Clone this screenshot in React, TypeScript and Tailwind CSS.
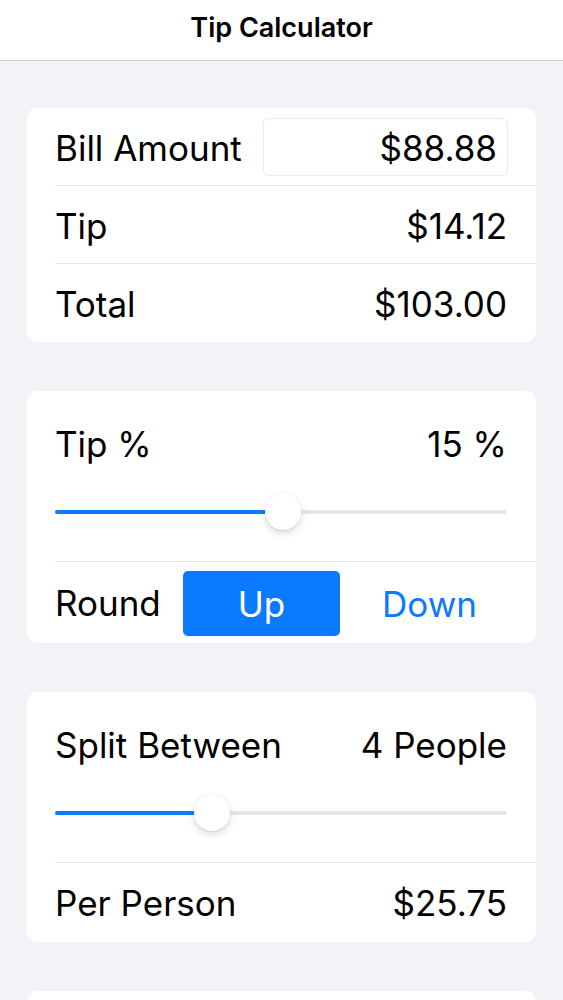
import { useState } from "react";

type RowProps = {
  label: string;
  value: string;
  divider?: boolean;
};

const Row = ({ label, value, divider }: RowProps) => (
  <div className="pl-7">
    <div
      className={
        "h-[78px] pt-[2px] pr-[29px] flex items-center justify-between " +
        (divider ? "border-b border-[#e4e4e8]" : "")
      }
    >
      <span>{label}</span>
      <span>{value}</span>
    </div>
  </div>
);

type SliderProps = {
  percent: number;
};

const Slider = ({ percent }: SliderProps) => (
  <div className="relative h-9 flex items-center">
    <div className="w-full h-1 rounded-full bg-[#e5e5ea] overflow-hidden flex">
      <div className="h-full bg-[#0a7aff]" style={{ width: `${percent}%` }} />
    </div>
    <div
      className="absolute top-0 w-9 h-9 -ml-[18px] rounded-full bg-white shadow-[0_3px_8px_rgba(0,0,0,0.15),0_1px_1px_rgba(0,0,0,0.08)]"
      style={{ left: `${percent}%` }}
    />
  </div>
);

export default function App() {
  const [round, setRound] = useState<"up" | "down">("up");

  return (
    <div className="min-h-screen bg-[#f2f2f7] font-['Inter',sans-serif] text-[35px] leading-[42px] text-black">
      <header className="h-[61px] bg-white border-b border-[#d1d1d6] flex items-center justify-center">
        <h1 className="text-[27px] leading-[34px] font-semibold -mt-1">
          Tip Calculator
        </h1>
      </header>

      <main className="px-[27px] pt-[47px] flex flex-col gap-[49px]">
        <section className="bg-white rounded-[10px] overflow-hidden">
          <div className="pl-7">
            <div className="h-[78px] pr-[28px] flex items-center justify-between border-b border-[#e4e4e8]">
              <span className="pt-[2px]">Bill Amount</span>
              <div className="w-[245px] h-[58px] border border-[#ebebef] rounded-md flex items-center justify-end pr-[10px] pt-[2px]">
                $88.88
              </div>
            </div>
          </div>
          <Row label="Tip" value="$14.12" divider />
          <Row label="Total" value="$103.00" />
        </section>

        <section className="bg-white rounded-[10px] overflow-hidden">
          <div className="pl-7">
            <div className="pr-[29px] pt-[32px] pb-[31px] border-b border-[#e4e4e8] flex flex-col gap-[29px]">
              <div className="flex items-center justify-between">
                <span>Tip %</span>
                <span>15 %</span>
              </div>
              <Slider percent={50.4} />
            </div>
            <div className="h-[81px] pr-[29px] flex items-center">
              <span className="w-[128px]">Round</span>
              <div className="flex-1 flex h-[65px] mt-[2px]">
                <button
                  className={
                    "w-[157px] rounded-[5px] " +
                    (round === "up" ? "bg-[#0a7aff] text-white" : "text-[#0a7aff]")
                  }
                  onClick={() => setRound("up")}
                >
                  Up
                </button>
                <button
                  className={
                    "flex-1 pl-3 rounded-[5px] " +
                    (round === "down" ? "bg-[#0a7aff] text-white" : "text-[#0a7aff]")
                  }
                  onClick={() => setRound("down")}
                >
                  Down
                </button>
              </div>
            </div>
          </div>
        </section>

        <section className="bg-white rounded-[10px] overflow-hidden">
          <div className="pl-7">
            <div className="pr-[29px] pt-[32px] pb-[31px] border-b border-[#e4e4e8] flex flex-col gap-[29px]">
              <div className="flex items-center justify-between">
                <span>Split Between</span>
                <span>4 People</span>
              </div>
              <Slider percent={34.7} />
            </div>
            <div className="h-[79px] pr-[29px] flex items-center justify-between">
              <span>Per Person</span>
              <span>$25.75</span>
            </div>
          </div>
        </section>

        <section className="bg-white rounded-[10px] h-[120px]" />
      </main>
    </div>
  );
}
